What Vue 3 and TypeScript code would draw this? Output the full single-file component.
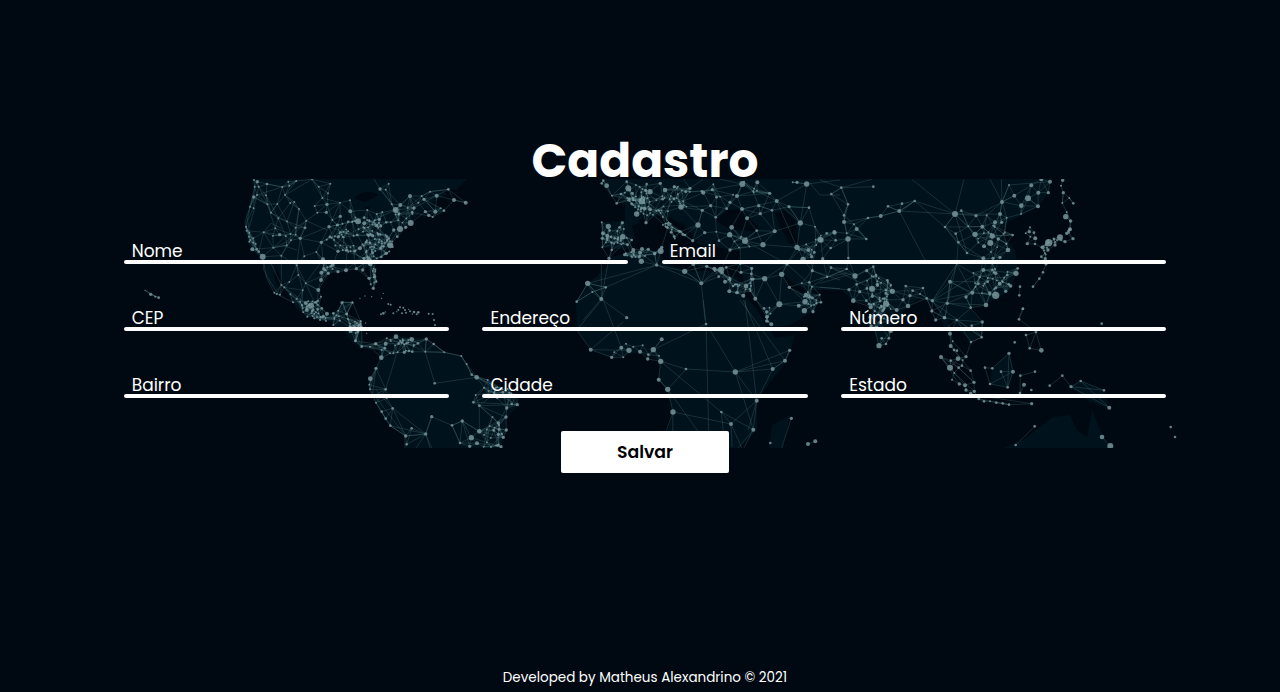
<script setup lang="ts">
interface Node { x: number; y: number; r: number }
interface Patch {
  ox: number
  oy: number
  reach: number
  degree: number
  points: string
  links?: string
  scatter?: number[][]
}

const rows = [
  ['Nome', 'Email'],
  ['CEP', 'Endereço', 'Número'],
  ['Bairro', 'Cidade', 'Estado'],
]

// Each patch lists "x,y,radius" in thirds of a pixel from its own origin.
const patches: Patch[] = [
  {
    ox: 120, oy: 170, reach: 66, degree: 3,
    points: '402,30,3 412,35,5 404,50,3 416,50,3 441,42,4 401,81,5 411,75,3 438,76,3 442,103,3 390,110,3 401,115,3 378,170,3 380,182,3 388,188,3 387,200,3 391,210,3 400,205,3 388,215,3 400,218,3 407,222,3 397,238,6 410,238,4 416,245,4 428,260,9 460,233,3 484,257,3 431,187,3 453,128,3 472,102,3 475,145,3 466,175,3 479,194,5 497,198,3 513,211,3 500,226,3 487,51,3 505,35,3 508,47,3 495,75,3 523,96,3 537,117,3 529,33,3 559,152,3 541,205,5 527,194,3 576,28,3 596,50,3 631,41,3 624,70,3 607,84,3 584,108,3 621,103,5 592,128,3 619,127,5 660,98,3 690,91,3 691,124,6 661,139,5 637,150,3 627,170,5 655,200,5 604,217,5 620,209,3 609,268,6 654,244,5 589,246,3 553,259,3 530,286,3 535,315,3 557,340,3 548,361,3 484,345,3 508,336,3 714,154,9 733,160,6 742,120,3 778,148,5 799,157,4 770,132,3 787,126,3 770,167,5 827,120,9 841,105,6 837,131,4 780,57,5 797,59,3 806,41,3 815,103,3 870,78,6 882,114,5 895,98,3 912,88,5 950,77,6 916,125,5 905,78,3 930,65,3 985,58,4 946,125,6 926,136,5 938,141,3 972,122,4 962,115,3 1002,90,6 1037,98,6 872,159,9 840,177,9 857,172,5 821,180,5 832,200,4 811,226,9 801,210,4 782,235,5 758,197,5 712,195,4 720,235,6 732,266,5 730,172,3 748,151,3 799,250,5 784,261,4 752,284,5 764,320,5 747,325,5 760,355,5 769,335,3 752,343,3 728,300,5 709,296,5 678,301,6 654,305,5 638,284,6 625,310,5 614,300,4 604,308,6 603,330,6 595,360,6 603,380,3 573,407,9 557,399,6 560,420,6 530,386,3 519,397,3 540,395,3 546,405,3 593,393,4 593,418,4 562,440,3 583,445,3 600,450,3 621,431,6 640,430,4 655,422,3 668,397,3 697,397,3 680,432,4 684,447,3 660,452,3 640,465,3 690,470,3 705,455,3 722,453,3 725,470,3 690,485,4 706,513,4 725,530,4 767,522,4 795,535,4 493,352,3 511,373,3 463,368,3 470,372,3 480,374,3 92,373,5 106,380,3 116,383,4 75,361,2',
    links: '401,81,387,120 387,120,375,155 375,155,380,182 404,115,388,170 390,110,378,170 401,115,383,150 383,150,388,188 428,260,431,300 431,300,453,340 453,340,475,372 428,260,440,325 440,325,463,368 453,280,484,345 428,260,460,233 460,233,500,226 442,103,466,175 472,102,453,128 438,76,475,145 431,187,453,160 453,160,484,175 397,238,460,233 401,81,442,103 411,75,487,51 495,75,537,117 576,28,495,75 576,28,607,84 576,28,596,50 537,117,527,194 559,152,500,215 559,152,620,180 541,205,604,217 541,205,530,286 530,286,548,361 530,286,557,340 604,217,655,244 604,217,609,268 609,268,557,340 530,240,487,226 557,340,595,360 557,340,625,310 484,257,484,345 484,345,557,400 541,205,627,170 780,57,762,27 780,57,820,105 797,59,841,105 827,120,780,140 827,120,870,78 930,65,985,58 905,78,930,65 841,105,870,78 841,105,882,114 882,114,870,78 946,125,950,77 882,114,950,77 1002,90,1037,98 441,42,487,51 509,47,529,33 668,397,697,397 697,397,680,432 668,397,655,422 668,397,680,432 690,470,690,485',
    scatter: [[715,195,88,55,62,190],[775,225,45,38,36,80],[735,272,45,12,14,40],[620,288,30,14,6,60],[840,135,55,28,10,52],[762,320,10,28,8,20],[575,412,38,20,18,45],[615,440,45,14,14,45],[705,470,18,20,8,30],[500,160,65,70,6,70]],
  },
  {
    // Caribbean islands, unlinked
    ox: 120, oy: 170, reach: 0, degree: 0,
    points: '740,490,2 737,459,2 942,450,3 945,465,3 938,432,3 926,431,3 895,427,4 882,426,4 870,424,3 850,413,3 846,430,3 840,412,3 812,404,3 805,402,3 785,385,2 755,380,2 735,378,2 720,385,2 790,430,4 783,433,3 820,430,3 830,425,2 790,370,2 858,428,3 866,418,2 877,432,2 890,433,3 835,420,3 796,426,2 855,420,3',
  },
  {
    ox: 340, oy: 290, reach: 66, degree: 3,
    points: '107,161,5 137,161,6 168,140,7 176,161,4 189,152,3 215,148,7 234,160,4 259,147,5 281,162,4 313,187,3 256,185,3 124,203,7 108,235,5 91,266,7 88,284,3 90,298,3 137,298,4 108,338,3 125,365,4 137,386,4 151,407,4 158,355,4 140,325,3 197,438,5 215,415,4 257,432,5 275,380,5 200,463,4 336,406,4 367,393,5 394,443,8 411,460,6 418,424,7 389,469,5 360,459,4 475,433,5 485,432,4 490,442,5 473,466,5 483,470,5 453,471,3 431,470,3 499,420,5 498,381,5 475,399,5 500,354,5 515,342,4 532,344,5 530,315,4 508,308,3 497,302,3 472,292,3 443,270,3 410,262,7 395,254,4 380,222,3 364,198,3 284,280,4 400,337,4 418,347,4 407,315,3 455,318,3 472,325,3 432,293,3 125,180,3 150,190,3 160,190,3 173,187,3 193,187,5 207,183,4 217,185,4 200,160,3 140,145,3 90,170,3 65,168,3 47,152,4 25,115,4 5,38,4 38,38,3 20,72,4 62,95,3',
    links: '170,190,137,298 256,185,284,280 284,280,410,262 259,147,256,185 281,162,313,187 259,147,313,187 313,187,364,198 364,198,380,222 380,222,395,254 395,254,472,292 275,380,336,406 275,380,257,432 257,432,228,474 257,432,270,474 257,432,275,474 257,432,197,438 336,406,367,393 418,347,418,424 400,337,432,293 400,337,532,344 418,347,475,399 418,424,475,399 418,347,498,381 500,354,475,399 410,262,497,302 108,235,137,298 108,235,90,298 108,338,137,386 108,235,98,310 98,310,197,438 108,300,158,355 137,298,95,320 158,355,197,438 158,355,257,432 151,407,257,432 151,407,197,438 367,393,418,424 336,406,360,459 367,393,389,469 367,393,360,459 418,424,490,442 418,424,498,381 418,347,532,344 432,293,532,344 475,399,490,442 195,438,195,474 217,185,313,187',
    scatter: [[175,164,48,22,14,45],[475,310,40,22,12,55],[460,425,32,45,12,65],[45,112,20,22,10,35]],
  },
  {
    ox: 560, oy: 170, reach: 70, degree: 3,
    points: '140,47,7 125,40,4 130,32,4 156,77,3 183,72,4 205,55,9 200,35,4 217,70,5 170,100,4 208,87,5 245,93,10 270,65,8 257,61,4 260,42,4 301,40,5 315,60,7 343,50,5 390,55,5 430,68,6 457,59,5 547,42,9 592,37,6 711,37,5 740,42,8 698,37,3 629,70,5 650,93,6 596,107,5 636,121,4 601,131,5 531,78,6 510,97,5 452,107,5 427,121,5 363,111,8 414,165,8 434,188,5 230,132,8 270,118,6 258,158,5 187,158,5 145,169,8 125,157,3 129,190,6 127,205,5 127,232,3 188,200,8 142,198,6 164,205,4 202,224,4 155,240,4 172,183,3 194,254,5 203,224,3 215,210,4 220,240,6 246,237,6 240,248,6 265,238,5 284,250,5 302,243,9 305,232,5 290,285,5 244,274,8 147,265,5 374,304,8 400,282,6 440,289,5 463,296,6 483,299,9 499,292,4 476,320,4 495,335,6 508,364,6 550,377,6 558,348,7 575,295,5 543,307,5 614,326,8 665,313,8 688,352,5 735,395,8 738,375,7 716,407,6 733,422,8 759,425,5 783,397,4 779,374,3 756,350,3 748,337,4 725,340,3 757,302,5 801,320,3 729,268,8 745,240,6 755,260,5 780,209,8 824,188,6 721,159,8 711,232,8 658,403,9 620,426,5 586,386,6 519,348,4 530,368,5 424,340,6 510,240,5 555,213,9 609,224,8 644,184,6 509,194,8 515,172,7 477,212,4 469,185,3 546,117,6 561,145,6 500,116,4 467,142,4 398,212,5 375,195,4 357,183,4 590,182,4 687,110,5 747,113,4 765,170,3 83,340,8 97,366,3 50,395,4 124,387,6 137,352,4 200,443,5 541,280,5 681,282,5 620,440,5',
    links: '83,340,124,387 83,340,50,395 124,387,200,443 124,387,70,450 50,395,97,366 83,340,137,352 137,352,290,285 97,366,137,352 124,280,124,387 83,340,290,285 124,387,147,265 290,285,374,304 374,304,424,340 424,340,400,282 424,340,435,450 290,285,424,340 424,340,483,299 740,42,721,159 780,75,840,75 780,75,750,40 721,159,711,232 687,110,747,113 687,110,721,159 721,159,650,93 650,93,740,42 650,93,711,232 614,326,658,403 658,403,665,313 658,403,735,395 658,403,620,440 688,352,735,395 614,326,586,386 555,213,681,282 609,224,711,232 756,350,840,356 757,302,840,330 541,235,541,280 644,184,560,213 390,55,430,28 390,55,371,28 547,42,480,28 363,111,452,107 681,282,665,313 681,282,756,350 681,282,614,326 681,282,541,280 711,232,681,282 546,117,650,93 531,78,547,42 457,59,547,42 592,37,629,70 596,107,636,121 546,117,596,107 629,70,531,78 555,213,644,184 601,131,644,184 315,60,390,55 363,111,315,60 363,111,390,55 363,111,427,121 363,111,414,165 644,184,721,159 740,42,840,30 509,194,555,213 555,213,509,240 452,107,430,68 427,121,414,165',
    scatter: [[230,85,45,42,40,80],[280,125,40,25,12,60],[345,95,60,48,24,90],[325,170,18,20,12,30],[355,195,14,16,6,25],[165,195,38,34,20,70],[225,250,62,12,14,35],[505,330,12,10,4,40],[530,355,12,14,6,40],[478,305,16,8,4,30],[552,215,60,20,6,110],[568,340,16,32,10,50],[748,390,25,28,12,45],[530,60,110,28,10,110],[765,225,60,30,8,80]],
  },
  {
    ox: 560, oy: 300, reach: 48, degree: 3,
    points: '92,149,6 155,172,5 163,157,3 184,143,6 207,151,8 198,131,3 220,140,3 190,172,3 240,155,6 248,136,3 265,164,4 263,177,5 280,149,8 305,118,6 297,167,3 302,184,8 296,239,6 323,268,8 378,207,4 339,336,8 438,72,4 526,216,8 638,207,6 675,182,6 689,151,5 590,302,6 580,389,6 513,372,6 484,336,4 694,355,5 631,429,4 744,432,6 766,424,6 612,25,4 620,63,5 634,73,6',
    links: '280,149,438,72 305,118,280,149 302,184,296,239 296,239,323,268 438,72,430,0 438,72,446,395 450,90,526,216 302,184,378,207 378,207,526,216 323,268,378,207 302,184,484,336 323,268,415,395 323,268,339,336 339,336,318,395 339,336,338,395 339,336,513,372 526,216,590,302 526,216,638,207 526,216,675,182 526,216,689,151 675,182,689,151 638,207,675,182 638,207,590,302 638,207,550,0 675,182,540,0 555,0,590,302 526,216,580,389 590,302,580,389 590,302,513,372 484,336,580,389 484,336,490,395 513,372,516,440 513,372,545,443 580,389,552,443 580,389,535,443 590,302,565,390 694,355,665,443 92,149,190,65 92,149,50,90 92,149,155,172 130,0,184,143 50,90,125,0 92,149,207,151',
    scatter: [[628,45,12,24,5,20]],
  },
  {
    ox: 820, oy: 170, reach: 66, degree: 3,
    points: '64,53,4 34,72,4 160,50,4 84,103,4 72,136,4 72,156,6 43,186,6 47,211,4 20,190,4 3,210,8 84,207,8 110,177,6 139,207,4 80,190,3 102,163,3 144,144,4 182,138,6 204,109,4 238,123,6 246,101,4 284,93,4 32,234,4 85,264,4 8,266,5 405,132,9 424,122,4 375,171,4 407,191,4 445,169,3 465,193,8 468,137,5 500,136,3 540,132,6 546,96,6 583,77,6 567,45,3 634,46,6 655,68,6 685,68,5 690,35,6 664,28,6 624,85,9 604,107,7 654,109,6 603,132,3 560,143,3 525,157,6 545,157,5 487,170,6 517,198,8 511,219,9 535,207,5 492,229,6 564,240,7 578,195,4 415,217,4 441,249,4 490,265,6 519,265,5 540,262,5 105,318,8 140,302,5 156,356,9 217,364,8 172,343,5 110,343,4 87,359,5 119,365,5 100,392,7 139,392,4 157,379,5 198,401,9 264,408,7 249,389,5 270,377,5 278,362,4 257,348,4 212,347,3 152,412,6 230,420,6 168,315,4 300,372,3 309,354,4 337,392,5 320,385,4 336,422,4 390,335,6 382,400,5 438,381,5 457,368,6 503,335,4 490,300,6 479,321,4 527,376,11 498,405,7 509,369,5 539,341,6 527,310,5 588,310,8 562,315,4 572,348,5 557,364,5 593,295,4 452,413,4 374,443,5 33,293,4 80,297,4 22,321,3 160,290,4',
    links: '64,53,34,72 64,53,0,30 64,53,160,50 64,53,84,103 34,72,72,136 64,53,155,28 84,103,72,136 238,123,405,132 284,93,405,132 246,123,284,93 275,28,405,132 405,132,432,28 238,123,320,280 405,132,540,132 375,171,405,132 375,171,487,170 375,171,410,217 407,191,415,217 415,217,410,282 415,217,441,249 546,96,510,28 546,96,544,28 546,96,540,132 546,96,583,77 546,96,604,107 546,96,468,137 546,96,500,136 540,132,545,157 567,45,690,35 546,96,567,45 634,46,604,107 634,46,583,77 654,109,603,132 604,107,603,132 624,85,655,109 410,282,382,400 410,282,390,335 410,282,457,368 410,282,337,392 390,335,337,392 390,335,450,369 390,335,382,400 390,335,503,335 390,335,457,368 410,282,503,335 410,282,490,265 415,217,490,265 465,193,405,132 465,193,487,170 445,169,424,122 382,400,457,368 382,400,498,405 337,392,457,368 284,93,375,171 284,93,238,123 405,132,441,249 337,392,490,300 0,245,35,210 35,234,84,207 72,136,80,190 84,207,85,264 33,293,105,318 33,293,156,356 22,321,80,297 182,138,238,123 144,144,182,138 72,156,144,144 204,109,238,123 110,177,139,207 382,400,452,413 438,381,452,413 0,352,87,359 0,340,100,310 0,325,80,310 217,364,156,356 264,408,217,364 217,364,278,362 270,377,337,392 320,385,336,422 465,193,564,240 517,198,578,195 490,300,588,310 457,368,490,300 457,368,503,335 457,368,479,321',
    scatter: [[515,205,52,52,14,85],[515,325,58,52,22,90],[165,355,72,38,18,80],[185,405,40,22,16,60]],
  },
  {
    // Japan, Korea and the Pacific rim
    ox: 820, oy: 170, reach: 32, degree: 3,
    points: '728,31,5 723,47,3 730,68,5 748,84,3 727,99,3 760,100,4 737,140,8 740,126,3 752,153,5 750,178,6 720,202,9 686,218,11 740,190,5 759,206,5 735,215,5 705,225,5 668,232,6 684,240,5 664,260,4 676,266,5 678,283,4 669,307,4 658,326,4 639,350,4 628,185,5 642,188,4 646,205,6 622,221,5 645,222,4 631,200,3 617,190,3 630,172,3 600,350,4 598,376,4 609,416,4',
    links: '748,84,760,100 730,68,727,99 658,326,639,350 609,416,595,448',
    scatter: [[712,215,30,12,8,30],[678,240,16,18,6,25],[748,172,6,22,5,15]],
  },
  {
    ox: 820, oy: 300, reach: 48, degree: 2,
    points: '177,137,8 153,78,5 212,92,7 185,115,4 207,115,4 198,132,4 347,60,5 373,53,5 335,34,4 410,60,4 487,66,5 485,112,4 453,126,4 455,77,4 390,101,6 392,138,6 398,124,3 402,150,4 411,152,4 414,176,7 438,170,5 428,181,3 426,197,4 452,212,4 363,171,6 392,182,4 390,203,9 416,203,4 403,219,3 396,239,3 418,252,5 435,256,6 462,247,5 463,274,5 438,270,5 452,280,5 476,297,4 492,304,4 510,304,3 529,308,4 548,310,4 567,314,4 635,311,5',
    links: '463,285,635,311 567,314,635,311 476,297,567,314 337,5,485,112 410,60,485,112 410,60,452,25 452,25,487,66 410,60,487,66 487,66,485,112 453,126,485,112 410,60,453,126 347,60,382,0 373,53,382,30 410,60,386,78 386,78,390,101 163,80,177,137 212,92,177,137 363,171,416,203 363,171,390,203 392,182,462,247 390,203,435,256 392,138,452,212 398,124,438,170 416,203,462,247 403,219,463,274 363,171,418,252',
    scatter: [[180,42,32,30,14,65],[185,80,18,12,4,40]],
  },
  {
    // Borneo, Philippines, New Guinea and Australia
    ox: 820, oy: 300, reach: 0, degree: 0,
    points: '495,203,4 517,205,4 567,160,5 579,215,6 563,262,4 510,252,4 543,215,4 601,227,4 645,215,4 612,254,6 634,270,4 600,279,4 608,27,4 597,58,4 618,105,4 648,96,4 664,151,7 629,145,4 584,127,4 689,257,4 727,227,4 753,260,5 782,243,4 852,271,4 868,323,6 845,71,4 846,411,7 871,438,9 587,435,4 644,379,4 1052,381,4 1065,411,4',
    links: '587,435,644,379 846,411,871,438 517,205,567,160 495,203,517,205 495,203,510,252 510,252,563,262 510,252,579,215 563,262,579,215 567,160,579,215 567,160,563,262 543,215,579,215 543,215,563,262 601,227,645,215 601,227,600,279 601,279,612,254 597,58,608,27 597,58,648,96 618,105,648,96 648,96,629,145 648,96,664,151 618,105,629,145 629,145,664,151 689,257,727,227 727,227,753,260 753,260,782,243 753,260,852,271 782,243,868,323 753,260,868,323 782,243,852,271',
  },
]

let seed = 4211
function rand() {
  seed = (seed + 0x6d2b79f5) | 0
  let t = Math.imul(seed ^ (seed >>> 15), 1 | seed)
  t = (t + Math.imul(t ^ (t >>> 7), 61 | t)) ^ t
  return ((t ^ (t >>> 14)) >>> 0) / 4294967296
}

const nodes: Node[] = []
const segments: string[] = []

for (const p of patches) {
  const gx = (v: number) => +(p.ox + v / 3).toFixed(1)
  const gy = (v: number) => +(p.oy + v / 3).toFixed(1)
  const local: Node[] = p.points.split(' ').map((t) => {
    const [x, y, r] = t.split(',').map(Number)
    return { x, y, r }
  })
  for (const [cx, cy, rx, ry, count] of p.scatter ?? []) {
    for (let i = 0; i < count; i++) {
      const a = rand() * Math.PI * 2
      const d = Math.sqrt(rand())
      local.push({ x: cx + Math.cos(a) * d * rx, y: cy + Math.sin(a) * d * ry, r: rand() > 0.8 ? 4.2 : 2.8 })
    }
  }
  const seen = new Set<string>()
  local.forEach((a, i) => {
    const near = local
      .map((b, j) => ({ j, d: Math.hypot(a.x - b.x, a.y - b.y) }))
      .filter((n) => n.j !== i && n.d < p.reach)
      .sort((m, n) => m.d - n.d)
    // In crowded areas a longer span joins the closest neighbours.
    const picks = near.slice(0, p.degree)
    if (near.length > 9) picks.push(near[6 + Math.floor(rand() * (near.length - 6) * 0.7)])
    picks.forEach(({ j }) => {
      const key = i < j ? `${i}-${j}` : `${j}-${i}`
      if (seen.has(key)) return
      seen.add(key)
      segments.push(`M${gx(a.x)} ${gy(a.y)}L${gx(local[j].x)} ${gy(local[j].y)}`)
    })
    nodes.push({ x: gx(a.x), y: gy(a.y), r: +(a.r / 3).toFixed(2) })
  })
  for (const l of p.links?.split(' ') ?? []) {
    const [x1, y1, x2, y2] = l.split(',').map(Number)
    segments.push(`M${gx(x1)} ${gy(y1)}L${gx(x2)} ${gy(y2)}`)
  }
}

const land = [
  'M251 179L254 190 246 215 245 230 249 245 263 262 268 282 280 295 274 275 276 264 283 285 296 308 310 318 330 322 345 332 353 343 360 348 373 350 363 340 361 322 345 318 352 303 341 303 337 312 322 315 318 295 320 280 332 272 368 268 374 287 377 280 373 264 386 254 395 240 399 230 410 223 425 208 438 214 444 210 432 203 447 194 442 188 456 190 467 179Z',
  'M377 345L397 336 427 339 446 353 461 356 472 375 488 380 510 390 518 402 517 407 507 417 505 432 501 448 405 448 407 438 390 426 380 412 369 390 370 378 376 368 381 358Z',
  'M610 258L628 252 660 248 662 262 690 272 705 270 737 277 745 295 757 310 775 338 795 335 790 353 782 368 770 382 757 402 757 430 740 448 664 448 673 412 668 390 658 380 661 362 650 355 640 352 612 358 591 350 577 330 576 302 588 284 608 266Z',
  'M600 179L1050 179 1048 193 1038 207 1020 216 1008 222 1000 232 1015 250 1018 270 1010 290 996 300 970 308 980 322 982 335 970 342 955 325 949 318 951 340 945 330 938 310 930 300 920 298 908 307 890 328 886 345 878 345 872 325 868 305 850 298 842 290 810 290 820 297 815 310 790 325 775 327 770 325 757 300 745 283 737 262 735 250 700 245 685 225 660 215 640 220 635 240 625 250 602 247 601 222 625 222 625 205 612 193Z',
  'M772 425L790 415 783 448 769 448Z',
  'M1003 448L1023 440 1053 417 1070 415 1077 430 1087 437 1092 410 1100 430 1110 448Z',
  'M992 368L1009 353 1013 372 1008 387 990 384Z',
  'M1071 387L1081 381 1104 390 1109 408 1090 402Z',
].join('')
const water = [
  'M716 221L726 210 740 209 758 226 757 232 730 229Z',
  'M775 213L784 210 795 220 799 243 790 244 780 227Z',
  'M782 273L794 284 808 290 800 294 792 291Z',
  'M742 285L748 289 770 322 766 325Z',
  'M632 226L646 220 660 231 666 245 684 256 681 260 660 252 638 248 628 249 635 238Z',
  'M668 216L690 230 688 236 673 226Z M696 248L741 251 741 263 718 266 696 262Z',
  'M354 198Q364 188 379 195L365 202Z M364 207L368 217 370 207Z',
].join('')
const web = segments.join('')
</script>

<template>
  <div class="page">
    <main class="register">
      <svg class="map" viewBox="120 179 1060 269" aria-hidden="true">
        <path class="land" :d="land" />
        <path class="water" :d="water" />
        <path class="web" :d="web" />
        <circle v-for="(n, i) in nodes" :key="i" class="node" :cx="n.x" :cy="n.y" :r="n.r" />
      </svg>
      <h1>Cadastro</h1>
      <form @submit.prevent>
        <div v-for="(row, i) in rows" :key="i" class="row">
          <label v-for="name in row" :key="name" class="field"><span>{{ name }}</span></label>
        </div>
        <button type="submit">Salvar</button>
      </form>
    </main>
    <footer>Developed by Matheus Alexandrino © 2021</footer>
  </div>
</template>

<style>
body {
  background: #000911;
  overflow: hidden;
}
</style>

<style scoped>
.page {
  box-sizing: border-box;
  height: 692px;
  display: flex;
  flex-direction: column;
  justify-content: space-between;
  padding: 134px 114px 4px 124px;
  font-family: Poppins, Inter, "Open Sans", sans-serif;
  color: #fff;
}
.register {
  position: relative;
}
.map {
  position: absolute;
  left: -4px;
  top: 45px;
  width: 1060px;
  height: 269px;
}
.land { fill: #00121c; }
.water { fill: #000911; }
.web {
  fill: none;
  stroke: #609093;
  stroke-opacity: 0.4;
  stroke-width: 0.6;
}
.node {
  fill: #75949a;
  fill-opacity: 0.85;
}
h1 {
  position: relative;
  margin: 0;
  height: 50px;
  line-height: 54px;
  text-align: center;
  font-size: 47px;
  font-weight: 700;
}
form {
  position: relative;
  display: flex;
  flex-direction: column;
  align-items: center;
  padding-top: 52px;
}
.row {
  display: flex;
  gap: 33.7px;
  width: 1042.5px;
  height: 27.6px;
  margin-bottom: 39.6px;
}
.row:nth-child(3) { margin-bottom: 33.1px; }
.field {
  flex: 1;
  display: flex;
  flex-direction: column;
  justify-content: flex-end;
  font-size: 17px;
  line-height: 26px;
}
.field span {
  padding-left: 8px;
  margin-bottom: -4.3px;
}
.field::after {
  content: "";
  height: 3.8px;
  flex: none;
  border-radius: 2px;
  background: #fff;
}
button {
  width: 168px;
  height: 42px;
  border: 0;
  border-radius: 2px;
  background: #fff;
  color: #000;
  font: inherit;
  font-size: 17.3px;
  font-weight: 600;
}
footer {
  text-align: center;
  font-size: 13.5px;
  line-height: 20px;
}
</style>
